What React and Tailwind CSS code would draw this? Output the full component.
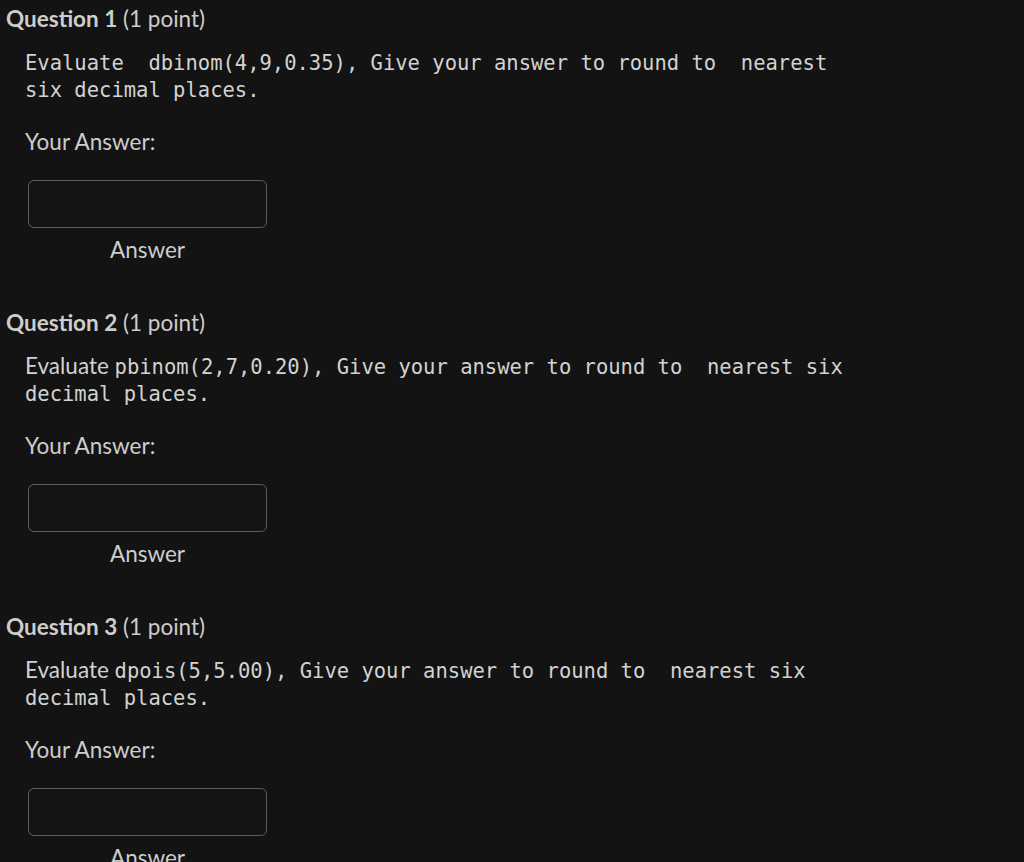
import React from 'react';

const sans = { fontFamily: 'Lato, "Open Sans", sans-serif' };

const questions = [
  {
    n: 1,
    lead: null,
    lines: ['Evaluate  dbinom(4,9,0.35), Give your answer to round to  nearest', 'six decimal places.'],
  },
  {
    n: 2,
    lead: 'Evaluate ',
    lines: ['pbinom(2,7,0.20), Give your answer to round to  nearest six', 'decimal places.'],
  },
  {
    n: 3,
    lead: 'Evaluate ',
    lines: ['dpois(5,5.00), Give your answer to round to  nearest six', 'decimal places.'],
  },
];

const Question = ({ q }) => (
  <section className="h-[304px]">
    <h2 className="pl-[6px] text-[22.5px] leading-[38px] text-[#cdcdcd] font-['Lato',sans-serif]">
      <span className="font-bold">Question {q.n}</span> (1 point)
    </h2>
    <div className="mt-[12px] pl-[25px] text-[20.5px] leading-[27px] text-[#d2d2d2] whitespace-pre font-['DejaVu_Sans_Mono',monospace]">
      <div className="h-[27px]">
        {q.lead && <span className="font-['Lato',sans-serif] text-[22.5px] leading-[20px]">{q.lead}</span>}
        {q.lines[0]}
      </div>
      <div className="h-[27px]">{q.lines[1]}</div>
    </div>
    <p className="mt-[24px] pl-[25px] text-[22.5px] leading-[27px] text-[#cdcdcd] font-['Lato',sans-serif]">
      Your Answer:
    </p>
    <div className="mt-[25px] ml-[28px] w-[239px] flex flex-col">
      <input
        type="text"
        className="h-[48px] w-full rounded-[6px] border border-[#5e5e5e] bg-[#141414] outline-none"
      />
      <span className="mt-[10px] text-center text-[22.5px] leading-[24px] text-[#cdcdcd] font-['Lato',sans-serif]">
        Answer
      </span>
    </div>
  </section>
);

export default function App() {
  return (
    <div className="min-h-screen w-full bg-[#131313] overflow-hidden" style={sans}>
      {questions.map(q => <Question key={q.n} q={q} />)}
    </div>
  );
}
